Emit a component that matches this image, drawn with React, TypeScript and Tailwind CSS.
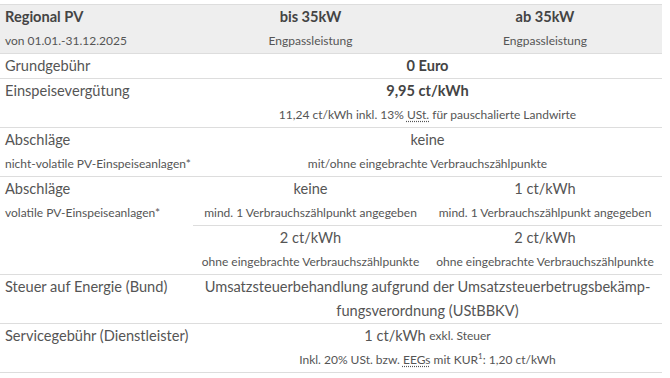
const font = { fontFamily: '"Lato", "Noto Sans", sans-serif' };

const Big = ({ children, bold }: { children: React.ReactNode; bold?: boolean }) => (
  <div className={`h-6 flex items-center justify-center whitespace-nowrap text-[14.6px] ${bold ? "font-bold text-[#444]" : ""}`}>
    {children}
  </div>
);

const Small = ({ children }: { children: React.ReactNode }) => (
  <div className="h-6 flex items-center justify-center whitespace-nowrap text-[12px]">{children}</div>
);

const Label = ({ children, small }: { children: React.ReactNode; small?: boolean }) => (
  <div className={`h-6 flex items-center pl-[5px] whitespace-nowrap ${small ? "text-[12px]" : "text-[14.6px]"}`}>
    {children}
  </div>
);

const Abbr = ({ children }: { children: React.ReactNode }) => (
  <abbr className="underline decoration-dotted underline-offset-2">{children}</abbr>
);

export default function App() {
  const cell = "border-t border-[#ddd] align-top p-0";
  return (
    <div className="w-[670px] h-[378px] bg-white pt-1 text-[#555]" style={font}>
      <table className="w-[662px] border-collapse table-fixed border-b border-[#ddd]">
        <colgroup>
          <col className="w-[193px]" />
          <col className="w-[235px]" />
          <col className="w-[234px]" />
        </colgroup>
        <tbody>
          {/* header */}
          <tr className="bg-[#eee]">
            <td className={cell}>
              <div className="h-6 flex items-center pl-[5px] text-[14.6px] font-bold text-[#444]">Regional PV</div>
              <Label small>von 01.01.-31.12.2025</Label>
            </td>
            <td className={cell}>
              <Big bold>bis 35kW</Big>
              <Small>Engpassleistung</Small>
            </td>
            <td className={cell}>
              <Big bold>ab 35kW</Big>
              <Small>Engpassleistung</Small>
            </td>
          </tr>
          <tr>
            <td className={cell}>
              <Label>Grundgebühr</Label>
            </td>
            <td className={cell} colSpan={2}>
              <Big bold>0 Euro</Big>
            </td>
          </tr>
          <tr>
            <td className={cell}>
              <Label>Einspeisevergütung</Label>
            </td>
            <td className={cell} colSpan={2}>
              <Big bold>9,95 ct/kWh</Big>
              <Small>
                11,24 ct/kWh inkl. 13%&nbsp;<Abbr>USt.</Abbr>&nbsp;für pauschalierte Landwirte
              </Small>
            </td>
          </tr>
          <tr>
            <td className={cell}>
              <Label>Abschläge</Label>
              <Label small>nicht-volatile PV-Einspeiseanlagen*</Label>
            </td>
            <td className={cell} colSpan={2}>
              <Big>keine</Big>
              <Small>mit/ohne eingebrachte Verbrauchszählpunkte</Small>
            </td>
          </tr>
          <tr>
            <td className={cell} rowSpan={2}>
              <Label>Abschläge</Label>
              <Label small>volatile PV-Einspeiseanlagen*</Label>
            </td>
            <td className={cell}>
              <Big>keine</Big>
              <Small>mind. 1 Verbrauchszählpunkt angegeben</Small>
            </td>
            <td className={cell}>
              <Big>1 ct/kWh</Big>
              <Small>mind. 1 Verbrauchszählpunkt angegeben</Small>
            </td>
          </tr>
          <tr>
            <td className={cell}>
              <Big>2 ct/kWh</Big>
              <Small>ohne eingebrachte Verbrauchszählpunkte</Small>
            </td>
            <td className={cell}>
              <Big>2 ct/kWh</Big>
              <Small>ohne eingebrachte Verbrauchszählpunkte</Small>
            </td>
          </tr>
          <tr>
            <td className={cell}>
              <Label>Steuer auf Energie (Bund)</Label>
            </td>
            <td className={cell} colSpan={2}>
              <Big>Umsatzsteuerbehandlung aufgrund der Umsatzsteuerbetrugsbekämp-</Big>
              <Big>fungsverordnung (UStBBKV)</Big>
            </td>
          </tr>
          <tr>
            <td className={cell}>
              <Label>Servicegebühr (Dienstleister)</Label>
            </td>
            <td className={cell} colSpan={2}>
              <div className="h-6 flex items-center justify-center whitespace-nowrap text-[14.6px]">
                1 ct/kWh&nbsp;<span className="text-[12px]">exkl. Steuer</span>
              </div>
              <Small>
                Inkl. 20% USt. bzw.&nbsp;<Abbr>EEGs</Abbr>&nbsp;mit KUR<sup className="text-[8px]">1</sup>: 1,20 ct/kWh
              </Small>
            </td>
          </tr>
        </tbody>
      </table>
    </div>
  );
}
